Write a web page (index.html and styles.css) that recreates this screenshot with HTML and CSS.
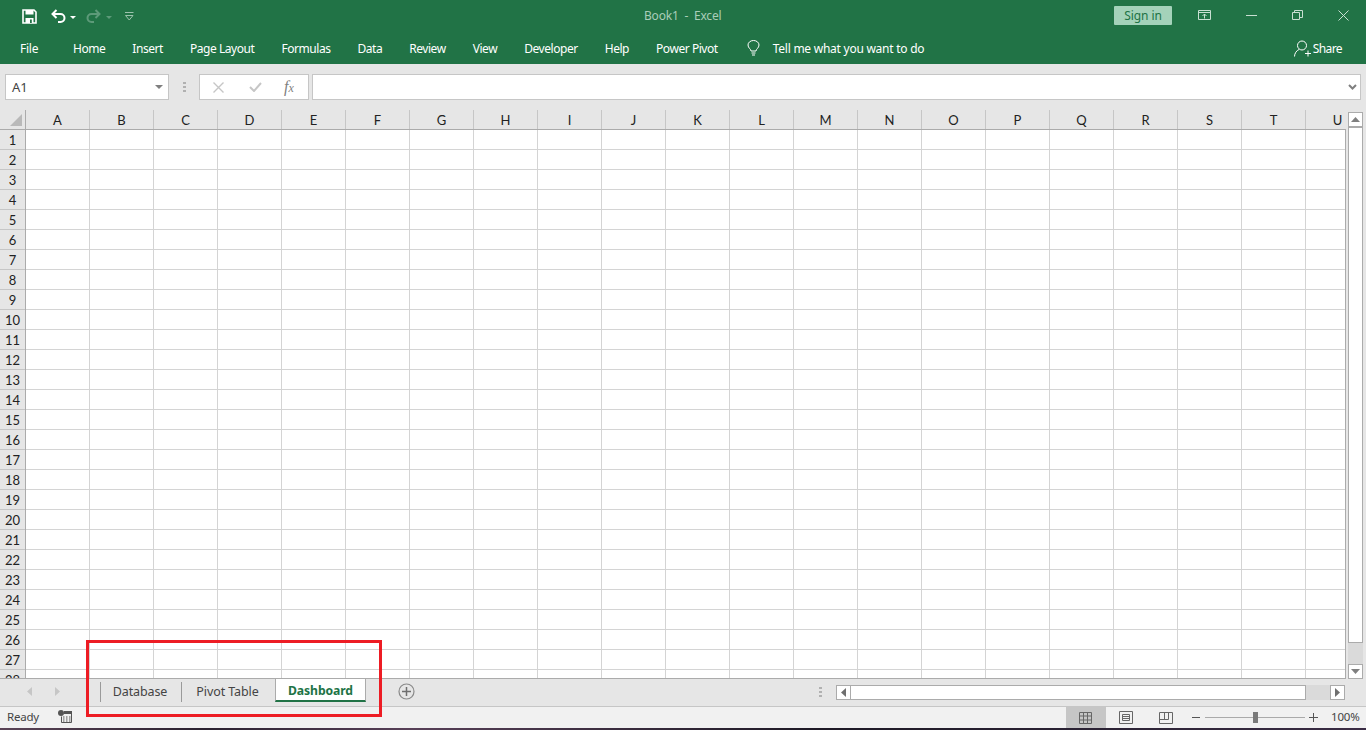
FILE: index.html
```html
<!DOCTYPE html>
<html lang="en">
<head>
<meta charset="utf-8">
<title>Book1 - Excel</title>
<link rel="stylesheet" href="styles.css">
</head>
<body>
<div class="app">
  <header class="titlebar">
    <div class="qat">
      <svg class="ic-save" width="15" height="15" viewBox="0 0 15 15"><path d="M1 1h11l2 2v11H1z" fill="none" stroke="#fff" stroke-width="1.600"/><path d="M3.500 1h8v4.500h-8z" fill="#fff"/><path d="M3.500 9h8v5h-8z" fill="#fff"/><path d="M8 10.500h1.800V14H8z" fill="#217346"/></svg>
      <svg class="ic-undo" width="15" height="14" viewBox="0 0 15 14"><path d="M5.500 1 1.500 5l4 4" fill="none" stroke="#fff" stroke-width="2"/><path d="M2 5h7.500a4 4 0 0 1 0 8H7" fill="none" stroke="#fff" stroke-width="2"/></svg>
      <svg class="ic-drop" width="6" height="3" viewBox="0 0 6 3"><path d="M0 0h6L3 3z" fill="#fff"/></svg>
      <svg class="ic-redo" width="15" height="14" viewBox="0 0 15 14"><path d="M9.500 1l4 4-4 4" fill="none" stroke="#5d9a79" stroke-width="2"/><path d="M13 5H5.500a4 4 0 0 0 0 8H8" fill="none" stroke="#5d9a79" stroke-width="2"/></svg>
      <svg class="ic-drop2" width="6" height="3" viewBox="0 0 6 3"><path d="M0 0h6L3 3z" fill="#5d9a79"/></svg>
      <svg class="ic-custom" width="9" height="9" viewBox="0 0 9 9"><path d="M0 .5h8.500" stroke="#9cc3ad" fill="none"/><path d="M.5 3.500 4.250 8 8 3.500z" fill="none" stroke="#9cc3ad"/></svg>
    </div>
    <div class="doc-title">Book1&nbsp; -&nbsp; Excel</div>
    <div class="signin">Sign in</div>
    <div class="win-controls">
      <svg width="13" height="10" viewBox="0 0 13 10"><path d="M.5.500h12v9H.500zM.5 2.500h12M6.500 8.500V4M4.500 6l2-2 2 2" fill="none" stroke="#c9dfd2"/></svg>
      <svg class="win-min" width="11" height="1" viewBox="0 0 11 1"><path d="M0 .5h11" stroke="#c9dfd2"/></svg>
      <svg class="win-max" width="11" height="10" viewBox="0 0 11 10"><path d="M.5 2.500h7v7h-7zM2.500 2.500v-2h8v7H7.500" fill="none" stroke="#c9dfd2"/></svg>
      <svg class="win-close" width="11" height="11" viewBox="0 0 11 11"><path d="M.5.500l10 10M10.500.5l-10 10" fill="none" stroke="#c9dfd2"/></svg>
    </div>
  </header>

  <nav class="ribbon">
    <span class="tab-file">File</span>
    <span class="tab-list">
      <span>Home</span><span>Insert</span><span>Page Layout</span><span>Formulas</span><span>Data</span><span>Review</span><span>View</span><span>Developer</span><span>Help</span><span>Power Pivot</span>
    </span>
    <svg class="ic-bulb" width="13" height="16" viewBox="0 0 13 16"><path d="M4 11c0-2-3-3-3-6a5.500 4.500 0 0 1 11 0c0 3-3 4-3 6z" fill="none" stroke="#fff"/><path d="M4.500 13h4M5 15h3" stroke="#fff" fill="none"/></svg>
    <span class="tell">Tell me what you want to do</span>
    <span class="share">
      <svg width="17" height="17" viewBox="0 0 17 17"><circle cx="8" cy="5.500" r="4.500" fill="none" stroke="#fff"/><path d="M.5 16.500c0-3 2-6 4.500-7M11 13.500h6M14 10.500v6" fill="none" stroke="#fff"/></svg>
      Share
    </span>
  </nav>

  <section class="formula-bar">
    <div class="name-box">
      <span>A1</span>
      <svg width="8" height="4" viewBox="0 0 8 4"><path d="M0 0h8L4 4z" fill="#7f7f7f"/></svg>
    </div>
    <div class="grip"><i></i><i></i><i></i></div>
    <div class="fx-box">
      <svg width="11" height="11" viewBox="0 0 11 11"><path d="M.5.500l10 10M10.500.5l-10 10" fill="none" stroke="#c6c6c6" stroke-width="1.400"/></svg>
      <svg width="13" height="10" viewBox="0 0 13 10"><path d="M1 5l4 4 7-8" fill="none" stroke="#c6c6c6" stroke-width="2"/></svg>
      <span class="fx"><em>f</em><em class="x">x</em></span>
    </div>
    <div class="formula-input">
      <svg width="9" height="6" viewBox="0 0 9 6"><path d="M1 1l3.500 3.500L8 1" fill="none" stroke="#7f7f7f" stroke-width="2"/></svg>
    </div>
  </section>

  <section class="sheet">
    <div class="sheet-main">
      <div class="col-head">
        <div class="corner"><span class="corner-tri"></span></div>
        <span>A</span><span>B</span><span>C</span><span>D</span><span>E</span><span>F</span><span>G</span><span>H</span><span>I</span><span>J</span><span>K</span><span>L</span><span>M</span><span>N</span><span>O</span><span>P</span><span>Q</span><span>R</span><span>S</span><span>T</span><span>U</span>
      </div>
      <div class="sheet-body">
        <div class="row-head">
          <span>1</span><span>2</span><span>3</span><span>4</span><span>5</span><span>6</span><span>7</span><span>8</span><span>9</span><span>10</span><span>11</span><span>12</span><span>13</span><span>14</span><span>15</span><span>16</span><span>17</span><span>18</span><span>19</span><span>20</span><span>21</span><span>22</span><span>23</span><span>24</span><span>25</span><span>26</span><span>27</span><span>28</span>
        </div>
        <div class="cells"></div>
      </div>
    </div>
    <div class="vscroll">
      <div class="sb-btn"><svg width="9" height="5" viewBox="0 0 9 5"><path d="M0 5h9L4.500 0z" fill="#7f7f7f"/></svg></div>
      <div class="v-thumb"></div>
      <div class="v-track"></div>
      <div class="sb-btn"><svg width="9" height="5" viewBox="0 0 9 5"><path d="M0 0h9L4.500 5z" fill="#7f7f7f"/></svg></div>
    </div>
  </section>

  <section class="tabbar">
    <div class="nav-arrows">
      <svg width="5" height="9" viewBox="0 0 5 9"><path d="M5 0v9L0 4.500z" fill="#c6c6c6"/></svg>
      <svg width="5" height="9" viewBox="0 0 5 9"><path d="M0 0v9l5-4.500z" fill="#c6c6c6"/></svg>
    </div>
    <div class="sheet-tabs">
      <div class="stab stab-first">Database</div>
      <div class="stab stab-second">Pivot Table</div>
      <div class="stab stab-active">Dashboard</div>
    </div>
    <svg class="ic-add" width="17" height="17" viewBox="0 0 17 17"><circle cx="8.500" cy="8.500" r="7.500" fill="none" stroke="#8a8a8a" stroke-width="1.200"/><path d="M8.500 4v9M4 8.500h9" stroke="#6f6f6f" stroke-width="1.500" fill="none"/></svg>
    <div class="grip grip-h"><i></i><i></i><i></i></div>
    <div class="hscroll">
      <div class="sb-btn"><svg width="5" height="9" viewBox="0 0 5 9"><path d="M5 0v9L0 4.500z" fill="#6f6f6f"/></svg></div>
      <div class="h-thumb"></div>
      <div class="h-track"></div>
      <div class="sb-btn"><svg width="5" height="9" viewBox="0 0 5 9"><path d="M0 0v9l5-4.500z" fill="#6f6f6f"/></svg></div>
    </div>
  </section>

  <footer class="statusbar">
    <span class="ready">Ready</span>
    <svg class="ic-macro" width="14" height="13" viewBox="0 0 14 13"><circle cx="3" cy="3" r="3" fill="#555"/><path d="M6 1h8v3H6z" fill="#555"/><path d="M3.500 6.500v6h10v-9" fill="none" stroke="#555"/><path d="M5 7h1.500M8 7h1.500M11 7h1.500M5 9h1.500M8 9h1.500M11 9h1.500M5 11h1.500M8 11h1.500M11 11h1.500" stroke="#555"/></svg>
    <div class="views">
      <div class="view view-on"><svg width="13" height="12" viewBox="0 0 13 12"><path d="M.5.500h12v11H.5zM.5 4h12M.5 8h12M4.500.5v11M8.500.5v11" fill="none" stroke="#666"/></svg></div>
      <div class="view"><svg width="14" height="13" viewBox="0 0 14 13"><path d="M.5.500h13v12H.5z" fill="none" stroke="#666"/><path d="M3.500 3.500h7v6h-7zM3.500 5.500h7M3.500 7.500h7" stroke="#666" fill="none"/></svg></div>
      <div class="view"><svg width="14" height="12" viewBox="0 0 14 12"><path d="M.5 11.500V.5h13v11H.5M.5 7.500h9v-7M5.500.5v7" fill="none" stroke="#666"/></svg></div>
    </div>
    <div class="zoom">
      <span class="zoom-minus"></span>
      <div class="slider"><span class="slider-thumb"></span></div>
      <span class="zoom-plus"></span>
      <span class="zoom-val">100%</span>
    </div>
  </footer>
  <div class="desktop-edge"></div>
  <div class="callout"></div>
</div>
</body>
</html>
```

FILE: styles.css
```css
* { box-sizing: border-box; }
html, body { margin: 0; padding: 0; }
body {
  width: 1366px;
  height: 730px;
  overflow: hidden;
  font-family: "Noto Sans", "Open Sans", sans-serif;
  font-size: 12px;
  background: #e6e6e6;
}
.app { position: relative; width: 1366px; height: 730px; display: flex; flex-direction: column; }
svg { display: block; flex: none; }

/* title bar */
.titlebar { height: 32px; background: #217346; display: flex; align-items: center; position: relative; }
.qat { display: flex; align-items: center; padding-left: 22px; }
.ic-undo { margin-left: 14px; }
.ic-drop { margin-left: 4px; margin-top: 2px; }
.ic-redo { margin-left: 10px; }
.ic-drop2 { margin-left: 5px; margin-top: 2px; }
.ic-custom { margin-left: 13px; }
.doc-title { position: absolute; left: 644px; top: 7px; color: #a9cdb9; font-size: 12px; letter-spacing: -.2px; }
.signin { position: absolute; left: 1114px; top: 6px; width: 58px; height: 19px; border-radius: 1px; background: #a4d2ba; color: #217346; display: flex; align-items: center; justify-content: center; font-size: 12px; letter-spacing: -.1px; }
.win-controls { position: absolute; left: 1198px; top: 10px; display: flex; align-items: center; height: 10px; }
.win-min { margin-left: 35px; }
.win-max { margin-left: 35px; }
.win-close { margin-left: 35px; }

/* ribbon tabs */
.ribbon { height: 32px; background: #217346; color: #fff; display: flex; align-items: center; font-size: 12px; letter-spacing: -.25px; white-space: nowrap; }
.tab-file { margin-left: 20px; width: 53px; }
.tab-list { display: flex; gap: 27px; letter-spacing: -.45px; }
.ic-bulb { margin-left: 29px; }
.tell { margin-left: 13px; }
.share { margin-left: auto; margin-right: 24px; display: flex; align-items: center; gap: 2px; letter-spacing: -.6px; }

/* formula bar */
.formula-bar { height: 46px; display: flex; align-items: flex-start; padding: 10px 5px 0; background: #e6e6e6; }
.name-box { width: 164px; height: 26px; background: #fff; border: 1px solid #c6c6c6; display: flex; align-items: center; justify-content: space-between; padding: 0 5px 0 6px; font-size: 13px; color: #444; }
.grip { width: 3px; display: flex; flex-direction: column; gap: 2px; }
.grip i { display: block; width: 3px; height: 2px; background: #b1b1b1; }
.formula-bar .grip { margin: 8px 13px 0 14px; }
.fx-box { width: 110px; height: 26px; background: #fff; border: 1px solid #c6c6c6; display: flex; align-items: center; padding-left: 13px; }
.fx-box svg:nth-child(2) { margin-left: 25px; }
.fx { margin-left: 22px; font-family: "Liberation Serif", serif; font-size: 16px; color: #7f7f7f; }
.fx em { font-style: italic; }
.fx .x { font-size: 12px; }
.formula-input { width: 1049px; height: 26px; margin-left: 3px; background: #fff; border: 1px solid #c6c6c6; display: flex; align-items: center; justify-content: flex-end; padding-right: 3px; }

/* sheet */
.sheet { height: 569px; display: flex; }
.sheet-main { width: 1346px; display: flex; flex-direction: column; font-family: "Lato", "Noto Sans", sans-serif; font-size: 13px; color: #222; }
.col-head { height: 20px; display: flex; overflow: hidden; border-bottom: 1px solid #ababab; flex: none; }
.corner { flex: none; width: 26px; border-right: 1px solid #ababab; position: relative; }
.corner-tri { position: absolute; right: 3px; bottom: 3px; border-style: solid; border-width: 0 0 12px 12px; border-color: transparent transparent #b9b9b9 transparent; }
.col-head > span { flex: none; width: 64px; border-right: 1px solid #c6c6c6; display: flex; align-items: center; justify-content: center; }
.sheet-body { flex: 1; min-height: 0; display: flex; overflow: hidden; border-bottom: 1px solid #ababab; }
.row-head { flex: none; width: 26px; border-right: 1px solid #ababab; }
.row-head span { display: flex; align-items: center; justify-content: center; height: 20px; border-bottom: 1px solid #c6c6c6; }
.cells {
  flex: 1;
  border-right: 1px solid #ababab;
  background-color: #fff;
  background-image:
    linear-gradient(to right, transparent 63px, #d4d4d4 63px),
    linear-gradient(to bottom, transparent 19px, #d4d4d4 19px);
  background-size: 64px 20px;
}
.vscroll { width: 20px; padding: 2px 3px 0 2px; display: flex; flex-direction: column; }
.sb-btn { flex: none; width: 15px; height: 15px; background: #fff; border: 1px solid #ababab; display: flex; align-items: center; justify-content: center; }
.v-thumb { flex: none; height: 516px; background: #fff; border: 1px solid #ababab; }
.v-track { flex: 1; background: #dadada; }

/* sheet tabs */
.tabbar { height: 28px; display: flex; background: #e6e6e6; border-bottom: 1px solid #c6c6c6; position: relative; letter-spacing: -.1px; }
.nav-arrows { width: 100px; padding: 8px 0 0 27px; display: flex; gap: 23px; }
.sheet-tabs { display: flex; height: 23px; font-size: 12.500px; color: #444; }
.stab { display: flex; align-items: center; justify-content: center; margin-top: 3px; height: 20px; border-left: 1px solid #9a9a9a; padding: 0 2px 2px 0; }
.stab-first { width: 81px; }
.stab-second { width: 94px; }
.stab-active { width: 91px; height: 23px; margin-top: 0; background: #fff; border: solid #ababab; border-width: 0 1px 0 1px; border-bottom: 2px solid #217346; color: #217346; font-weight: 700; padding: 1px 0 0; font-size: 12.200px; }
.ic-add { margin: 4px 0 0 32px; }
.grip-h { margin: 8px 0 0 404px; }
.hscroll { display: flex; margin: 6px 0 0 14px; height: 15px; }
.h-thumb { width: 456px; margin-left: -1px; background: #fff; border: 1px solid #ababab; }
.h-track { width: 24px; background: #dadada; }

/* status bar */
.statusbar { height: 21px; background: #f1f1f1; display: flex; align-items: center; position: relative; font-size: 11.500px; color: #444; letter-spacing: -.2px; }
.ready { margin: -2px 0 0 7px; width: 51px; }
.ic-macro { margin-top: -2px; }
.views { position: absolute; left: 1066px; top: 0; display: flex; }
.view { width: 40px; height: 21px; display: flex; align-items: center; justify-content: center; padding-right: 1px; }
.view-on { background: #c6c6c6; padding-right: 2px; }
.zoom { position: absolute; left: 1192px; top: 0; height: 21px; display: flex; align-items: center; }
.zoom-minus { width: 8px; height: 1px; background: #555; }
.slider { width: 100px; height: 1px; margin-left: 5px; background: #aaa; position: relative; }
.slider-thumb { position: absolute; left: 48px; top: -5px; width: 5px; height: 11px; background: #7a7a7a; }
.zoom-plus { position: relative; width: 9px; height: 1px; background: #555; margin-left: 4px; }
.zoom-plus::after { content: ""; position: absolute; left: 4px; top: -4px; width: 1px; height: 9px; background: #555; }
.zoom-val { margin: -2px 0 0 13px; }
.desktop-edge { height: 2px; background: linear-gradient(to right, #5a4356, #2b2230 15%, #584058 30%, #1e1a26 60%, #3a2c44); }

/* annotation */
.callout { position: absolute; left: 86px; top: 640px; width: 296px; height: 77px; border: 3px solid #ed1c24; }
```
